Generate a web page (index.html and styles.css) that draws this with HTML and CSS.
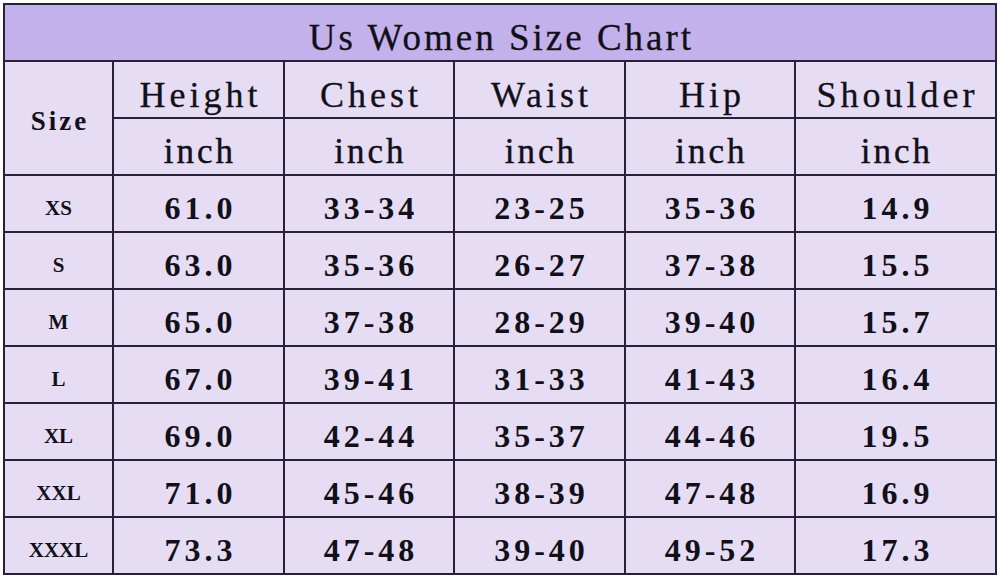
FILE: index.html
```html
<!DOCTYPE html>
<html lang="en">
<head>
<meta charset="utf-8">
<title>Us Women Size Chart</title>
<link rel="stylesheet" href="styles.css">
</head>
<body>
<div class="chart">
  <div class="cell title">Us Women Size Chart</div>
  <div class="cell size-head">Size</div>
  <div class="cell head">Height</div>
  <div class="cell head">Chest</div>
  <div class="cell head">Waist</div>
  <div class="cell head">Hip</div>
  <div class="cell head">Shoulder</div>
  <div class="cell unit">inch</div>
  <div class="cell unit">inch</div>
  <div class="cell unit">inch</div>
  <div class="cell unit">inch</div>
  <div class="cell unit">inch</div>

  <div class="cell label">XS</div>
  <div class="cell num">61.0</div><div class="cell num">33-34</div><div class="cell num">23-25</div><div class="cell num">35-36</div><div class="cell num">14.9</div>
  <div class="cell label">S</div>
  <div class="cell num">63.0</div><div class="cell num">35-36</div><div class="cell num">26-27</div><div class="cell num">37-38</div><div class="cell num">15.5</div>
  <div class="cell label">M</div>
  <div class="cell num">65.0</div><div class="cell num">37-38</div><div class="cell num">28-29</div><div class="cell num">39-40</div><div class="cell num">15.7</div>
  <div class="cell label">L</div>
  <div class="cell num">67.0</div><div class="cell num">39-41</div><div class="cell num">31-33</div><div class="cell num">41-43</div><div class="cell num">16.4</div>
  <div class="cell label">XL</div>
  <div class="cell num">69.0</div><div class="cell num">42-44</div><div class="cell num">35-37</div><div class="cell num">44-46</div><div class="cell num">19.5</div>
  <div class="cell label">XXL</div>
  <div class="cell num">71.0</div><div class="cell num">45-46</div><div class="cell num">38-39</div><div class="cell num">47-48</div><div class="cell num">16.9</div>
  <div class="cell label">XXXL</div>
  <div class="cell num">73.3</div><div class="cell num">47-48</div><div class="cell num">39-40</div><div class="cell num">49-52</div><div class="cell num">17.3</div>
</div>
</body>
</html>
```

FILE: styles.css
```css
html, body {
  margin: 0;
  padding: 0;
  background: #ffffff;
}

.chart {
  margin: 3px 0 0 3px;
  width: 994px;
  box-sizing: border-box;
  padding: 2px;
  background: #27223a;
  display: grid;
  grid-template-columns: 107px 169px 168px 169px 168px 199px;
  grid-auto-rows: 55px;
  gap: 2px;
  font-family: "Liberation Serif", "Times New Roman", serif;
  color: #111018;
}

.cell {
  background: #e6dcf3;
  display: flex;
  align-items: center;
  justify-content: center;
  padding-top: 10px;
  box-sizing: border-box;
  white-space: pre;
}

.title {
  grid-column: 1 / -1;
  background: #c3b1ec;
  font-size: 37px;
  letter-spacing: 3px;
  padding-left: 3px;
  -webkit-text-stroke: 0.3px #111018;
}

.size-head {
  grid-row: span 2;
  font-size: 27px;
  font-weight: bold;
  letter-spacing: 3px;
  padding-left: 3px;
  padding-top: 6px;
}

.head {
  font-size: 36px;
  letter-spacing: 4px;
  padding-left: 4px;
  -webkit-text-stroke: 0.3px #111018;
}

.unit {
  font-size: 35px;
  letter-spacing: 3px;
  padding-left: 3px;
  -webkit-text-stroke: 0.4px #111018;
}

.label {
  font-weight: bold;
  font-size: 21px;
}

.num {
  font-size: 32px;
  font-weight: bold;
  letter-spacing: 4px;
  padding-left: 4px;
}
```
